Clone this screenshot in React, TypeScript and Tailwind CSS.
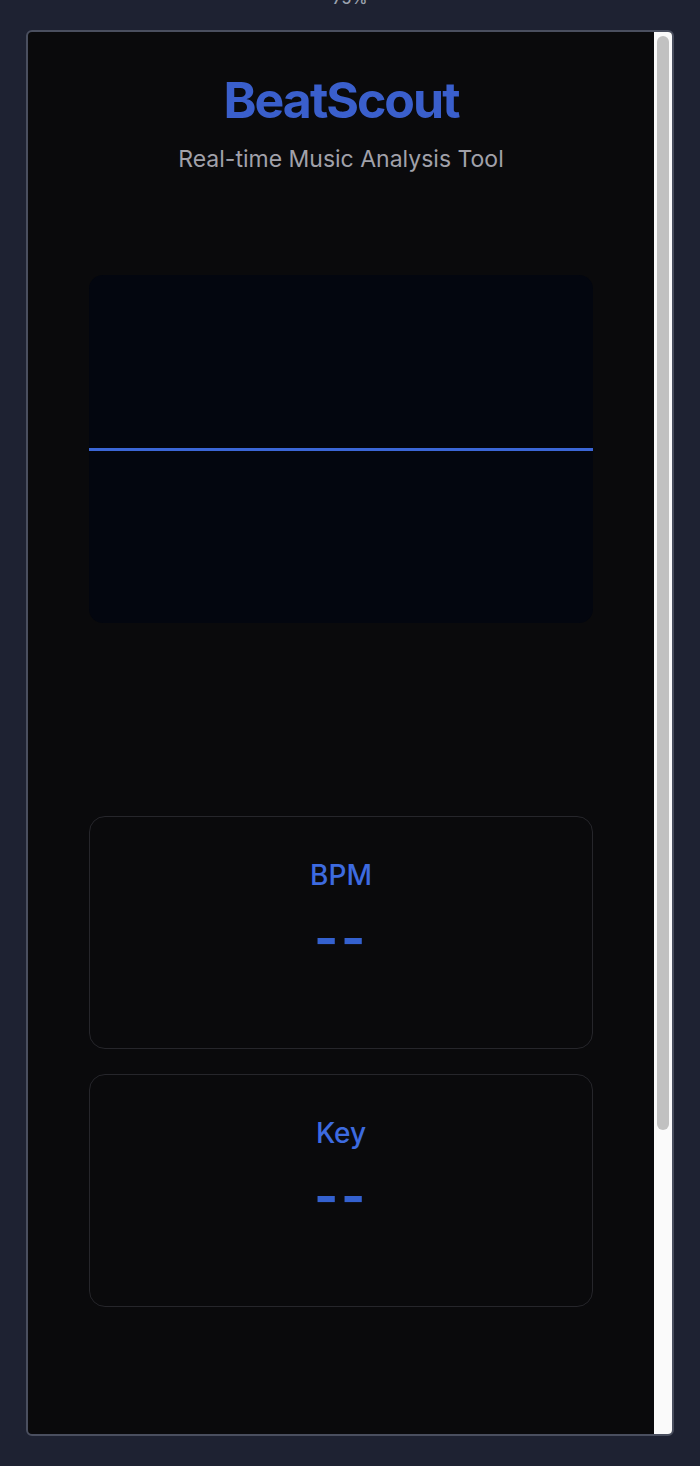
import React from 'react'

function StatCard({ label }: { label: string }) {
  return (
    <div className="flex h-[233px] flex-col items-center rounded-2xl border border-[#26262b] bg-[#0a0a0c] pt-[44px]">
      <h3 className="text-[28px] font-medium leading-none text-[#3d6be0]">{label}</h3>
      <div className="mt-[24px] text-[52px] font-bold leading-none tracking-[0.05em] text-[#3461cf]">--</div>
    </div>
  )
}

export default function App() {
  return (
    <div className="min-h-[1466px] bg-[#1e2232] font-['Inter','Noto_Sans',sans-serif]">
      {/* zoom label, mostly cut off */}
      <div className="flex h-[30px] justify-center overflow-hidden">
        <span className="-mt-[14px] text-[16px] font-medium text-[#9ca3af]">75%</span>
      </div>

      {/* Frame */}
      <div className="mx-[26px] flex h-[1406px] overflow-hidden rounded-[6px] border-2 border-[#4a4f5f] bg-[#0a0a0c]">
        <div className="flex flex-1 flex-col items-center">
          {/* Header */}
          <h1 className="mt-[43px] text-[50px] font-bold leading-none tracking-[-0.04em] text-[#3a5fcc]">
            BeatScout
          </h1>
          <p className="mt-[23px] text-[23px] leading-none text-[#a1a1aa]">Real-time Music Analysis Tool</p>

          {/* Visualizer */}
          <div className="mt-[104px] flex h-[348px] w-[504px] items-center rounded-[14px] bg-[#03060f]">
            <div className="h-[3px] w-full bg-[#3b66d6]" />
          </div>

          {/* Stats */}
          <div className="mt-[193px] flex w-[504px] flex-col gap-[25px]">
            <StatCard label="BPM" />
            <StatCard label="Key" />
          </div>
        </div>

        {/* Scrollbar */}
        <div className="flex w-[18px] flex-col bg-[#fafafa] px-[3px] pt-[4px]">
          <div className="h-[1094px] rounded-full bg-[#c1c1c1]" />
        </div>
      </div>
    </div>
  )
}
